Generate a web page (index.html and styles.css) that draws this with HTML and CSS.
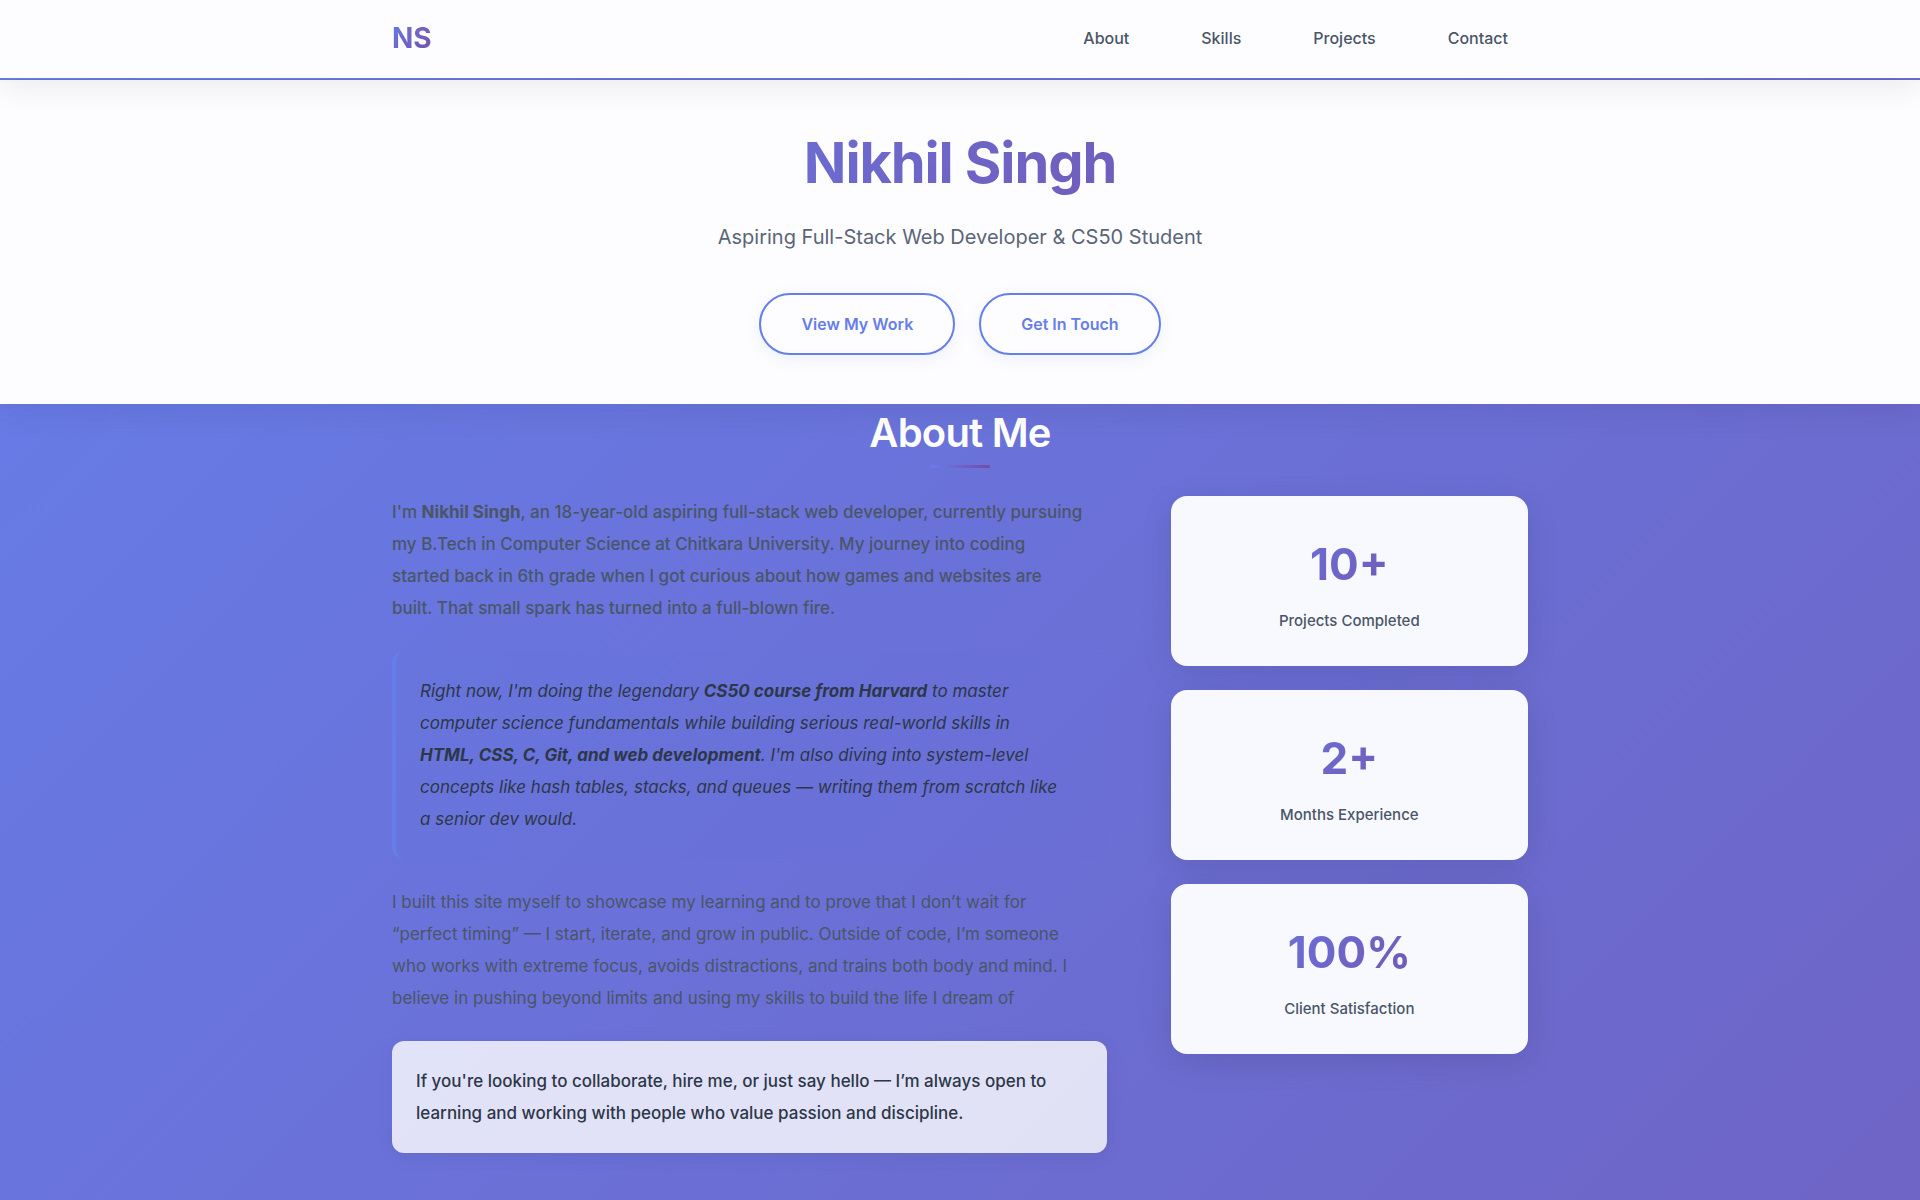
FILE: index.html
```html
<!DOCTYPE html>
<html lang="en">
<head>
<meta charset="utf-8">
<meta name="viewport" content="width=device-width, initial-scale=1">
<title>Nikhil Singh</title>
<link rel="stylesheet" href="styles.css">
</head>
<body>
<header class="site-header">
  <nav class="container nav">
    <a class="logo" href="#top">NS</a>
    <ul class="nav-links">
      <li><a href="#about">About</a></li>
      <li><a href="#skills">Skills</a></li>
      <li><a href="#projects">Projects</a></li>
      <li><a href="#contact">Contact</a></li>
    </ul>
  </nav>
</header>
<main>
  <section class="hero" id="top">
    <div class="container">
      <h1>Nikhil Singh</h1>
      <p class="tagline">Aspiring Full-Stack Web Developer &amp; CS50 Student</p>
      <div class="actions">
        <a class="btn" href="#projects">View My Work</a>
        <a class="btn" href="#contact">Get In Touch</a>
      </div>
    </div>
  </section>
  <section class="container about" id="about">
    <h2>About Me</h2>
    <div class="about-grid">
      <div class="about-text">
        <p class="intro">I'm <strong>Nikhil Singh</strong>, an 18-year-old aspiring full-stack web developer, currently pursuing<br> my B.Tech in Computer Science at Chitkara University. My journey into coding<br> started back in 6th grade when I got curious about how games and websites are<br> built. That small spark has turned into a full-blown fire.</p>
        <blockquote>Right now, I'm doing the legendary <strong>CS50 course from Harvard</strong> to master<br> computer science fundamentals while building serious real-world skills in<br> <strong>HTML, CSS, C, Git, and web development</strong>. I'm also diving into system-level<br> concepts like hash tables, stacks, and queues — writing them from scratch like<br> a senior dev would.</blockquote>
        <p>I built this site myself to showcase my learning and to prove that I don’t wait for<br> “perfect timing” — I start, iterate, and grow in public. Outside of code, I’m someone<br> who works with extreme focus, avoids distractions, and trains both body and mind. I<br> believe in pushing beyond limits and using my skills to build the life I dream of</p>
        <p class="callout">If you're looking to collaborate, hire me, or just say hello — I’m always open to<br> learning and working with people who value passion and discipline.</p>
      </div>
      <div class="stats">
        <div class="stat"><span class="stat-number">10+</span><span class="stat-label">Projects Completed</span></div>
        <div class="stat"><span class="stat-number">2+</span><span class="stat-label">Months Experience</span></div>
        <div class="stat"><span class="stat-number">100%</span><span class="stat-label">Client Satisfaction</span></div>
      </div>
    </div>
  </section>
</main>
</body>
</html>
```
FILE: styles.css
```css
:root {
  --brand: linear-gradient(135deg, #667eea 0%, #764ba2 100%);
  --bar-shadow: 0 8px 32px rgba(0, 0, 0, 0.07);
}
* {
  box-sizing: border-box;
  margin: 0;
  padding: 0;
}
body {
  min-height: 100vh;
  font-family: Inter, "Liberation Sans", sans-serif;
  font-size: 16px;
  color: #2d3748;
  background: linear-gradient(135deg, #667eea 0%, #764ba2 200%);
}
.container {
  width: 100%;
  max-width: 1200px;
  margin: 0 auto;
  padding: 0 32px;
}
.site-header {
  position: relative;
  z-index: 2;
  background: #fdfdff;
  background-clip: padding-box;
  border-bottom: 2px solid transparent;
  box-shadow: var(--bar-shadow);
}
.nav {
  display: flex;
  justify-content: space-between;
  align-items: center;
  height: 78px;
  padding-bottom: 2px;
}
.logo {
  font-size: 28px;
  line-height: 46px;
  font-weight: 700;
  text-decoration: none;
}
.logo,
h1,
.stat-number {
  background: var(--brand);
  background-clip: text;
  -webkit-background-clip: text;
  color: transparent;
}
.nav-links {
  display: flex;
  gap: 32px;
  list-style: none;
}
.nav-links a {
  padding: 8px 20px;
  font-weight: 500;
  color: #4a5568;
  text-decoration: none;
}
.hero {
  position: relative;
  z-index: 1;
  padding: 49px 0;
  text-align: center;
  background: #fdfdff;
  box-shadow: var(--bar-shadow);
}
h1 {
  font-size: 56px;
  line-height: 68px;
  font-weight: 700;
  letter-spacing: -0.02em;
  margin-bottom: 24px;
}
.tagline {
  font-size: 20px;
  line-height: 32px;
  color: #5a6578;
  margin-bottom: 40px;
}
.actions {
  display: flex;
  justify-content: center;
  gap: 24px;
}
.btn {
  padding: 16px 40px;
  border: 2px solid #667eea;
  border-radius: 50px;
  font-weight: 600;
  line-height: 26px;
  color: #667eea;
  text-decoration: none;
  background: #fdfdff;
  box-shadow: 0 4px 15px rgba(102, 126, 234, 0.1);
}
.about {
  padding-bottom: 47px;
}
h2 {
  position: relative;
  font-size: 40px;
  line-height: 58px;
  font-weight: 600;
  letter-spacing: -0.02em;
  color: #fff;
  text-align: center;
  margin-bottom: 34px;
}
h2::after {
  content: "";
  position: absolute;
  left: 50%;
  bottom: -6px;
  width: 60px;
  height: 3px;
  margin-left: -30px;
  border-radius: 2px;
  background: linear-gradient(90deg, #667eea, #764ba2);
}
.about-grid {
  display: grid;
  grid-template-columns: 2fr 1fr;
  gap: 64px;
  align-items: start;
}
.about-text {
  display: grid;
  gap: 27px;
  font-size: 17px;
  line-height: 32px;
  color: #4a5568;
}
.intro {
  font-weight: 500;
}
blockquote {
  padding: 24px;
  border-left: 4px solid #667eea;
  border-radius: 12px;
  font-style: italic;
  color: #2d3748;
  background: rgba(102, 126, 234, 0.05);
}
.callout {
  padding: 24px;
  border-radius: 12px;
  font-weight: 500;
  color: #2d3748;
  background: rgba(255, 255, 255, 0.8);
  box-shadow: 0 4px 20px rgba(0, 0, 0, 0.05);
}
.stats {
  display: grid;
  gap: 24px;
}
.stat {
  display: flex;
  flex-direction: column;
  padding: 32px;
  border-radius: 16px;
  text-align: center;
  background: #f8f9fe;
  box-shadow: 0 8px 32px rgba(0, 0, 0, 0.1);
}
.stat-number {
  font-size: 44px;
  line-height: 72px;
  font-weight: 700;
  margin-bottom: 8px;
}
.stat-label {
  font-size: 15px;
  line-height: 26px;
  font-weight: 500;
  color: #4a5568;
}
```
